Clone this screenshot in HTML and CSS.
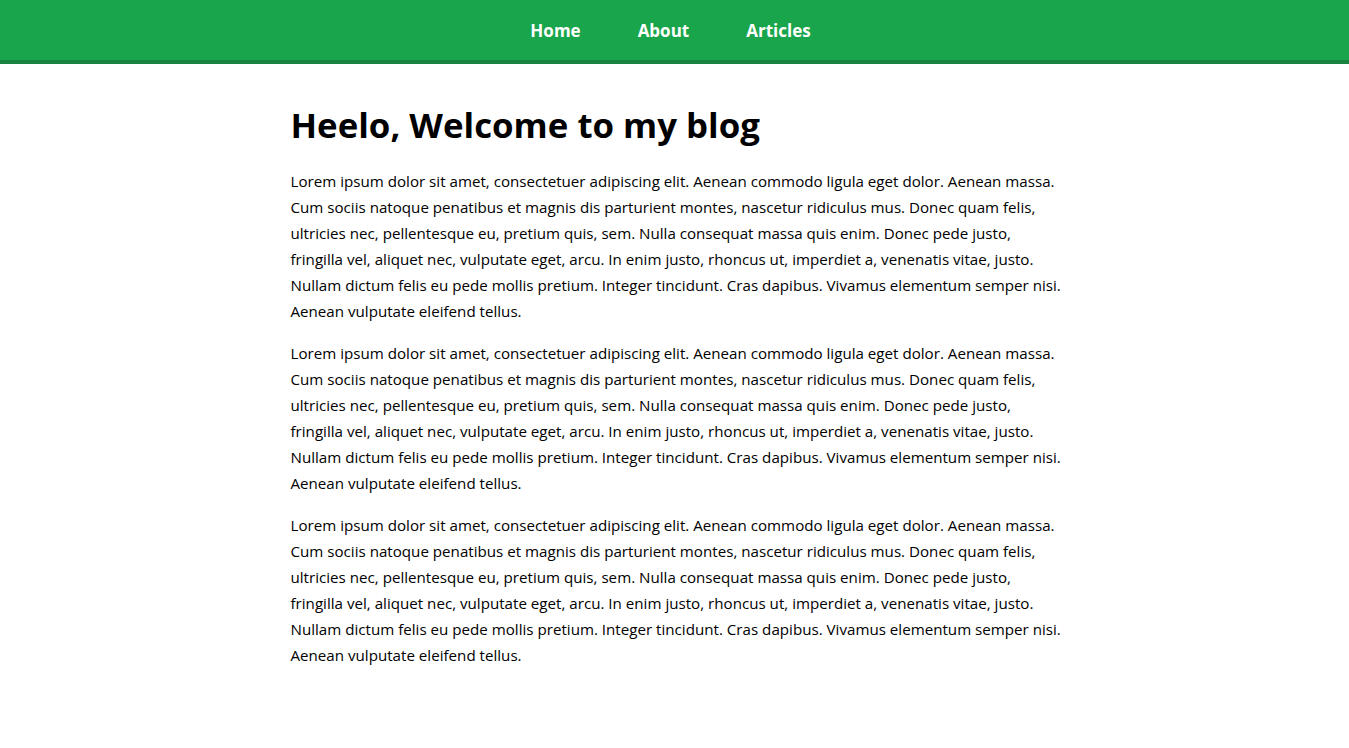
FILE: index.html
```html
<!DOCTYPE html>
<html lang="en">
<head>
<meta charset="utf-8">
<title>Blog</title>
<link rel="stylesheet" href="styles.css">
</head>
<body>
<header class="site-header">
  <nav class="nav">
    <a class="nav-link" href="#">Home</a>
    <a class="nav-link" href="#">About</a>
    <a class="nav-link" href="#">Articles</a>
  </nav>
</header>
<main class="content">
  <h1 class="title">Heelo, Welcome to my blog</h1>
  <p class="para">Lorem ipsum dolor sit amet, consectetuer adipiscing elit. Aenean commodo ligula eget dolor. Aenean massa.<br>Cum sociis natoque penatibus et magnis dis parturient montes, nascetur ridiculus mus. Donec quam felis,<br>ultricies nec, pellentesque eu, pretium quis, sem. Nulla consequat massa quis enim. Donec pede justo,<br>fringilla vel, aliquet nec, vulputate eget, arcu. In enim justo, rhoncus ut, imperdiet a, venenatis vitae, justo.<br>Nullam dictum felis eu pede mollis pretium. Integer tincidunt. Cras dapibus. Vivamus elementum semper nisi.<br>Aenean vulputate eleifend tellus.</p>
  <p class="para">Lorem ipsum dolor sit amet, consectetuer adipiscing elit. Aenean commodo ligula eget dolor. Aenean massa.<br>Cum sociis natoque penatibus et magnis dis parturient montes, nascetur ridiculus mus. Donec quam felis,<br>ultricies nec, pellentesque eu, pretium quis, sem. Nulla consequat massa quis enim. Donec pede justo,<br>fringilla vel, aliquet nec, vulputate eget, arcu. In enim justo, rhoncus ut, imperdiet a, venenatis vitae, justo.<br>Nullam dictum felis eu pede mollis pretium. Integer tincidunt. Cras dapibus. Vivamus elementum semper nisi.<br>Aenean vulputate eleifend tellus.</p>
  <p class="para">Lorem ipsum dolor sit amet, consectetuer adipiscing elit. Aenean commodo ligula eget dolor. Aenean massa.<br>Cum sociis natoque penatibus et magnis dis parturient montes, nascetur ridiculus mus. Donec quam felis,<br>ultricies nec, pellentesque eu, pretium quis, sem. Nulla consequat massa quis enim. Donec pede justo,<br>fringilla vel, aliquet nec, vulputate eget, arcu. In enim justo, rhoncus ut, imperdiet a, venenatis vitae, justo.<br>Nullam dictum felis eu pede mollis pretium. Integer tincidunt. Cras dapibus. Vivamus elementum semper nisi.<br>Aenean vulputate eleifend tellus.</p>
</main>
</body>
</html>
```

FILE: styles.css
```css
* { box-sizing: border-box; }
body {
  margin: 0;
  font-family: "Open Sans", "Noto Sans", sans-serif;
  color: #000;
  background: #fff;
}
.site-header {
  background: #19a54b;
  border-bottom: 4px solid #17833f;
  height: 64px;
}
.nav {
  display: flex;
  justify-content: center;
  align-items: center;
  height: 60px;
  gap: 57px;
  padding-right: 8px;
}
.nav-link {
  color: #fff;
  text-decoration: none;
  font-weight: 700;
  font-size: 17px;
}
.content {
  width: 768px;
  margin: 0 auto;
  padding-top: 40px;
}
.title {
  font-size: 34.8px;
  font-weight: 700;
  margin: 0 0 22px;
  line-height: 1.2;
}
.para {
  font-size: 15.15px;
  line-height: 26px;
  margin: 0 0 16px;
  white-space: nowrap;
}
```
